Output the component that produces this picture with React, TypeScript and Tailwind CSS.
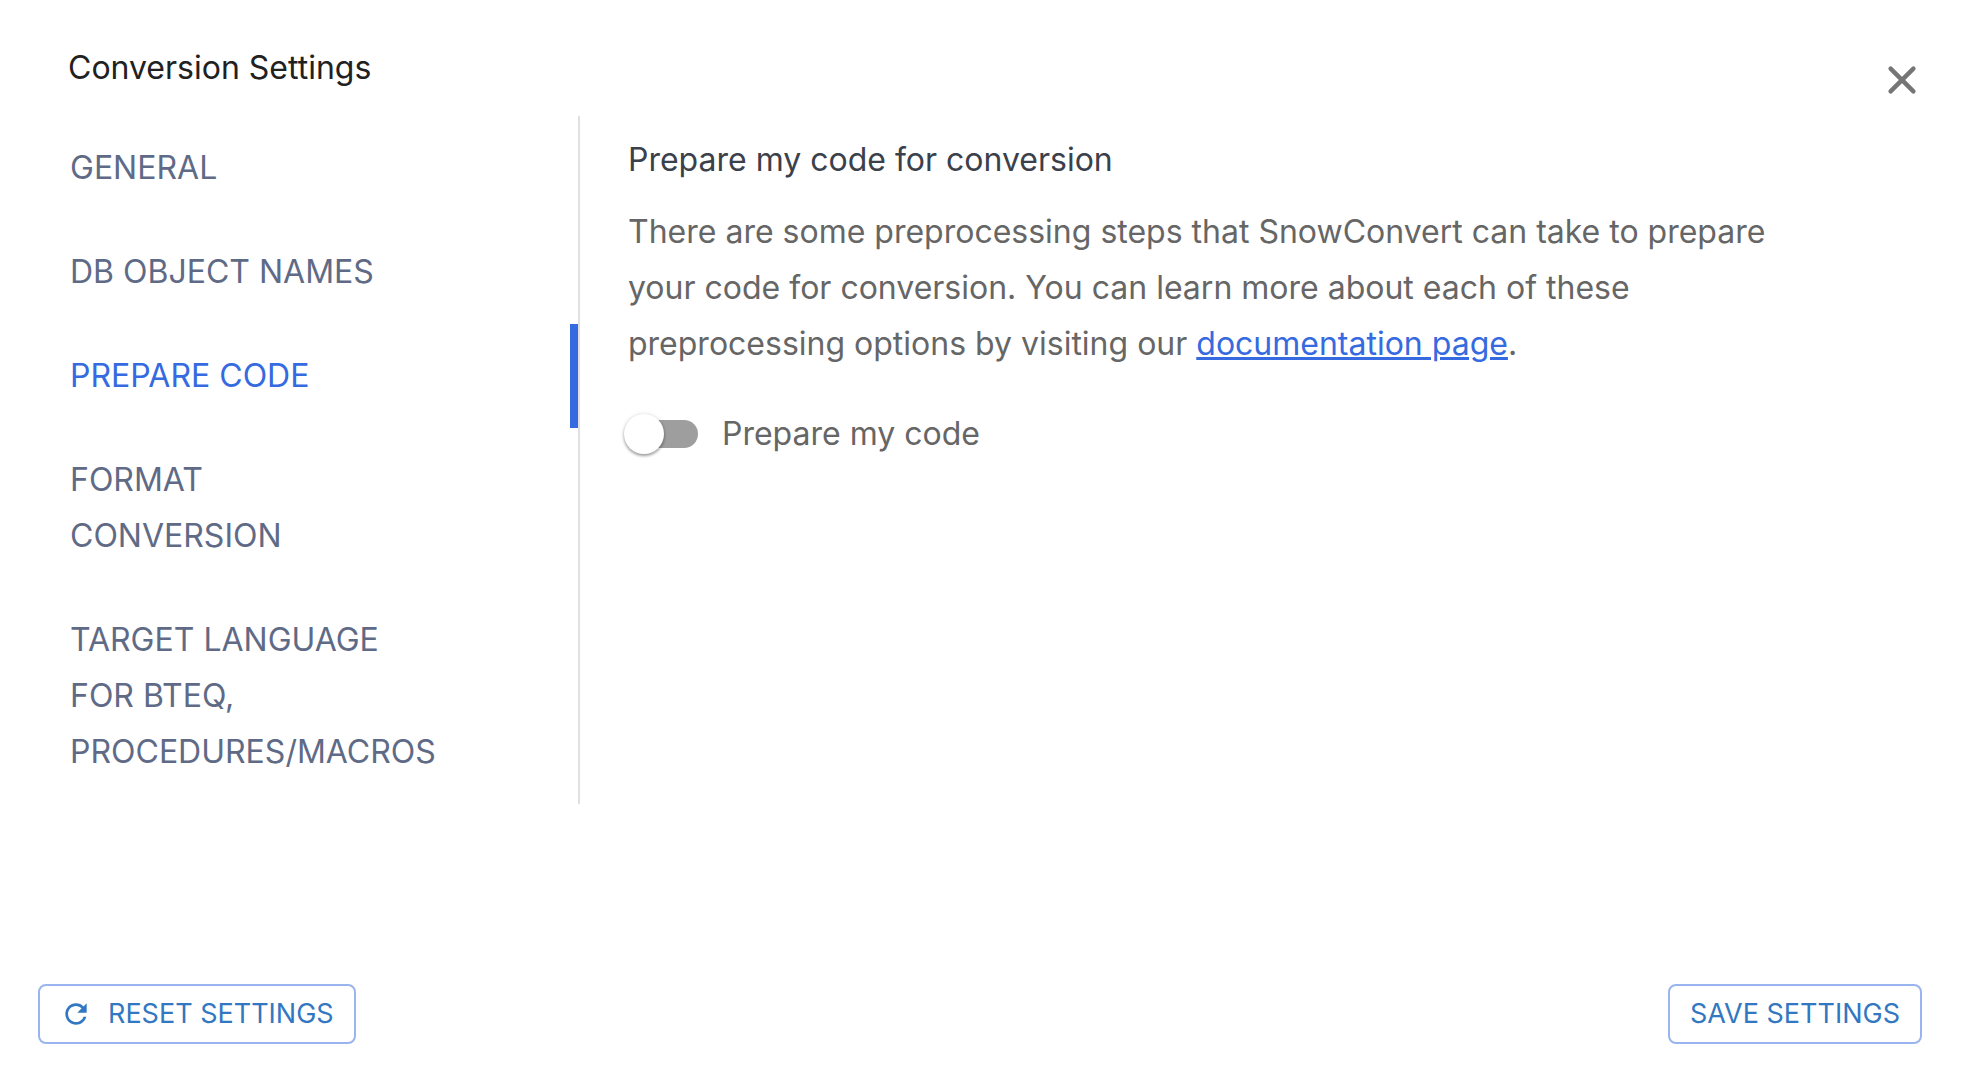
import { useState } from "react";

const sections = [
  { id: "general", label: "General" },
  { id: "names", label: "DB Object Names" },
  { id: "prepare", label: "Prepare Code" },
  { id: "format", label: "Format Conversion" },
  { id: "target", label: "Target Language for BTEQ, Procedures/Macros" },
];

interface SectionTabProps {
  label: string;
  isActive: boolean;
  onSelect: () => void;
}

const SectionTab = ({ label, isActive, onSelect }: SectionTabProps) => (
  <button
    type="button"
    role="tab"
    aria-selected={isActive}
    onClick={onSelect}
    className={`block w-full border-r-8 py-6 pl-8 pr-40 text-left uppercase ${
      isActive ? "border-[#356ae0] text-[#356ae0]" : "border-transparent text-[#5f6b86]"
    }`}
  >
    {label}
  </button>
);

interface SwitchProps {
  label: string;
  checked: boolean;
  onChange: (checked: boolean) => void;
}

const Switch = ({ label, checked, onChange }: SwitchProps) => (
  <label className="flex w-fit items-center gap-6">
    <input
      type="checkbox"
      role="switch"
      checked={checked}
      onChange={(e) => onChange(e.target.checked)}
      className="relative ml-0.5 h-7 w-17 appearance-none rounded-full bg-[#9e9e9e] before:absolute before:-top-1.5 before:-left-1.5 before:size-10 before:rounded-full before:bg-white before:shadow-[0_2px_3px_rgba(0,0,0,0.35),0_0_4px_rgba(0,0,0,0.12)] before:transition-transform checked:bg-[#9ab4ef] checked:before:translate-x-10 checked:before:bg-[#356ae0]"
    />
    {label}
  </label>
);

export default function App() {
  const [active, setActive] = useState("prepare");
  const [prepareCode, setPrepareCode] = useState(false);

  return (
    <div className="flex min-h-screen flex-col bg-white pt-10 pr-[62px] pb-10 pl-[38px] font-[Inter,sans-serif] text-[32px] leading-[56px]">
      <header className="flex items-start justify-between pl-[30px]">
        <h1 className="text-[#212121]">Conversion Settings</h1>
        <button type="button" aria-label="Close" className="mt-4 -mr-1 text-[#757575]">
          <svg
            viewBox="0 0 24 24"
            className="size-12"
            fill="none"
            stroke="currentColor"
            strokeWidth="2.2"
            strokeLinecap="round"
          >
            <path d="M6.3 6.3 17.7 17.7M17.7 6.3 6.3 17.7" />
          </svg>
        </button>
      </header>
      <main className="mt-3 flex flex-1 items-start">
        <nav role="tablist" className="w-[542px] shrink-0 border-r-2 border-[#e0e0e0]">
          {sections.map((section) => (
            <SectionTab
              key={section.id}
              label={section.label}
              isActive={section.id === active}
              onSelect={() => setActive(section.id)}
            />
          ))}
        </nav>
        <section className="flex-1 px-12 pt-4 text-[#666666]">
          <h2 className="text-[#3b414b]">Prepare my code for conversion</h2>
          <p className="mt-4 mb-[34px] max-w-[1180px]">
            There are some preprocessing steps that SnowConvert can take to prepare your code for conversion. You can
            learn more about each of these preprocessing options by visiting our{" "}
            <a href="#documentation" className="text-[#356ae0] underline">
              documentation page
            </a>
            .
          </p>
          <Switch label="Prepare my code" checked={prepareCode} onChange={setPrepareCode} />
        </section>
      </main>
      <footer className="flex items-center justify-between text-[27px] text-[#3277c1]">
        <button
          type="button"
          className="flex h-15 items-center gap-4 rounded-lg border-2 border-[#9ab4ef] px-5 uppercase"
        >
          <svg viewBox="0 0 24 24" className="size-8" fill="currentColor" aria-hidden="true">
            <path d="M17.65 6.35C16.2 4.9 14.21 4 12 4c-4.42 0-7.99 3.58-7.99 8s3.57 8 7.99 8c3.73 0 6.84-2.55 7.73-6h-2.08c-.82 2.33-3.04 4-5.65 4-3.31 0-6-2.69-6-6s2.69-6 6-6c1.66 0 3.14.69 4.22 1.78L13 11h7V4z" />
          </svg>
          Reset settings
        </button>
        <button
          type="button"
          className="flex h-15 items-center rounded-lg border-2 border-[#9ab4ef] px-5 uppercase"
        >
          Save settings
        </button>
      </footer>
    </div>
  );
}
